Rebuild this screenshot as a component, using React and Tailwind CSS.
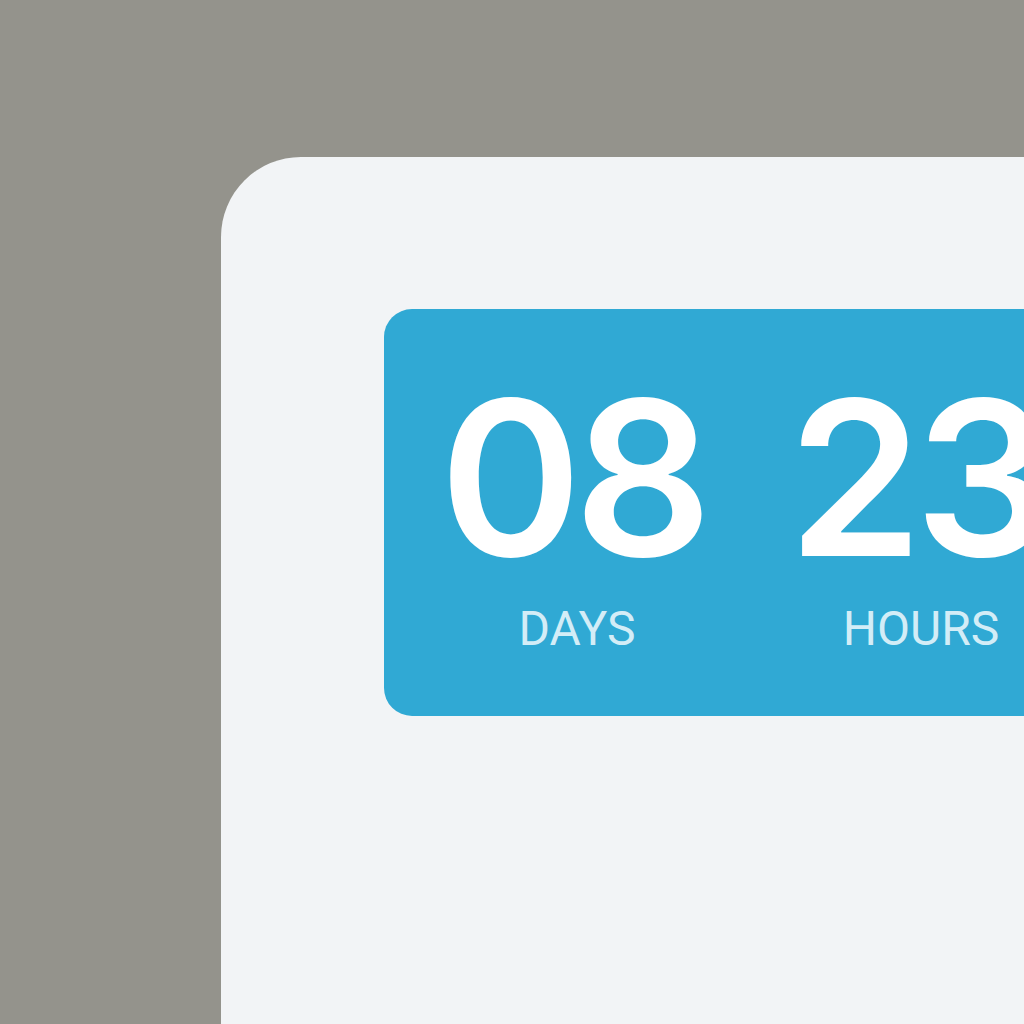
const UNITS = [
  { value: '08', label: 'DAYS' },
  { value: '23', label: 'HOURS' },
]

export default function App() {
  return (
    <div
      className="h-screen w-full overflow-hidden bg-[#94938c] flex pl-[221px] pt-[157px]"
      style={{ fontFamily: 'Roboto, "Liberation Sans", sans-serif' }}
    >
      {/* Panel */}
      <div className="flex-1 bg-[#f2f4f6] rounded-tl-[80px] pl-[163px] pt-[152px] overflow-hidden">

        {/* Countdown card */}
        <div className="w-max flex bg-[#30a9d4] rounded-[28px] pl-[21px] pr-[300px] pt-[61px] pb-[63px]">
          {UNITS.map((u) => (
            <div key={u.label} className="w-[344px] flex flex-col items-center">
              <div
                className="text-[216px] leading-none font-semibold text-white tracking-[-8px] pr-[10px]"
                style={{ fontFamily: 'Inter, Roboto, sans-serif' }}
              >
                {u.value}
              </div>
              <div className="mt-[19px] text-[48px] leading-none text-[#d3edf7]">
                {u.label}
              </div>
            </div>
          ))}
        </div>

      </div>
    </div>
  )
}
